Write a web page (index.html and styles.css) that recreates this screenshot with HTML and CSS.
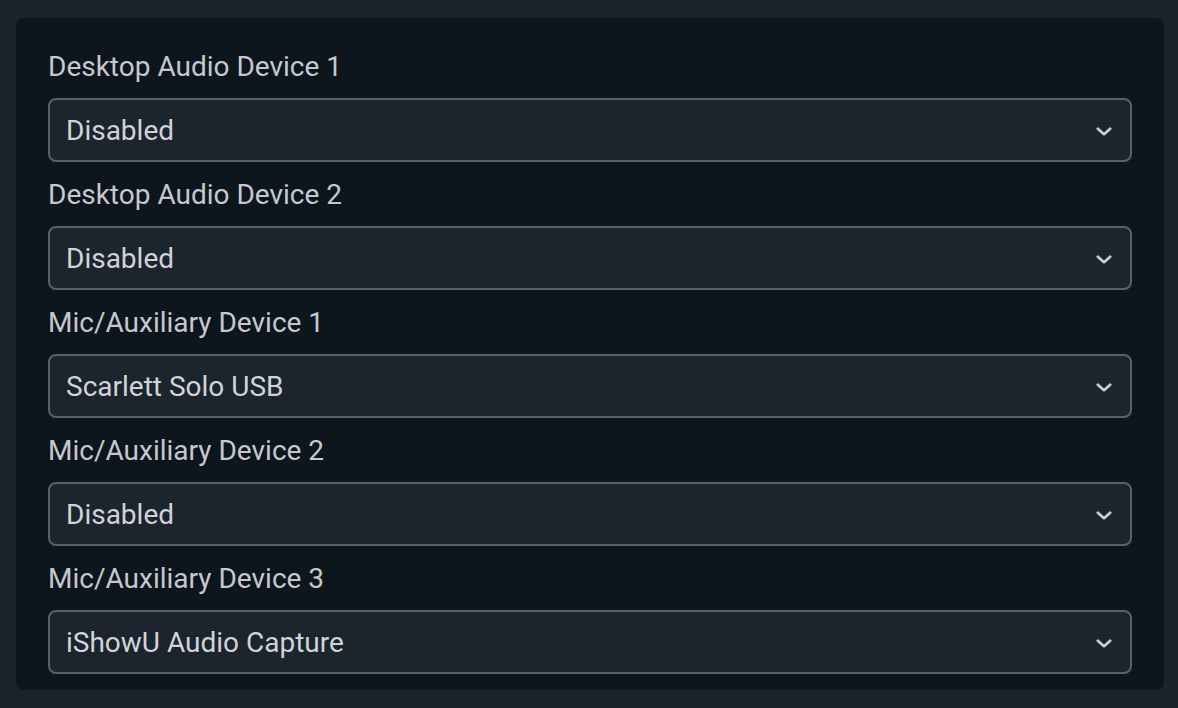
FILE: index.html
```html
<!DOCTYPE html>
<html lang="en">
<head>
<meta charset="utf-8">
<title>Audio Devices</title>
<link rel="stylesheet" href="styles.css">
</head>
<body>
<div class="panel">
  <div class="field">
    <div class="label">Desktop Audio Device 1</div>
    <div class="select"><span class="value">Disabled</span><svg class="chev" viewBox="0 0 14 8"><path d="M1.5 1.5 L7 6.5 L12.5 1.5"/></svg></div>
  </div>
  <div class="field">
    <div class="label">Desktop Audio Device 2</div>
    <div class="select"><span class="value">Disabled</span><svg class="chev" viewBox="0 0 14 8"><path d="M1.5 1.5 L7 6.5 L12.5 1.5"/></svg></div>
  </div>
  <div class="field">
    <div class="label">Mic/Auxiliary Device 1</div>
    <div class="select"><span class="value">Scarlett Solo USB</span><svg class="chev" viewBox="0 0 14 8"><path d="M1.5 1.5 L7 6.5 L12.5 1.5"/></svg></div>
  </div>
  <div class="field">
    <div class="label">Mic/Auxiliary Device 2</div>
    <div class="select"><span class="value">Disabled</span><svg class="chev" viewBox="0 0 14 8"><path d="M1.5 1.5 L7 6.5 L12.5 1.5"/></svg></div>
  </div>
  <div class="field">
    <div class="label">Mic/Auxiliary Device 3</div>
    <div class="select"><span class="value">iShowU Audio Capture</span><svg class="chev" viewBox="0 0 14 8"><path d="M1.5 1.5 L7 6.5 L12.5 1.5"/></svg></div>
  </div>
</div>
</body>
</html>
```

FILE: styles.css
```css
html, body {
  margin: 0;
  padding: 0;
  background: #1c232b;
}
body {
  padding: 18px 14px 18px 16px;
  font-family: Roboto, "Liberation Sans", sans-serif;
}
.panel {
  background: #0d161c;
  border-radius: 8px;
  padding: 33px 32px 16px 32px;
  display: flex;
  flex-direction: column;
}
.field + .field .label {
  padding-top: 17px;
}
.label {
  font-size: 28px;
  line-height: 32px;
  color: #c5c9cd;
  padding-bottom: 15px;
}
.select {
  height: 64px;
  box-sizing: border-box;
  border: 2px solid #5a6269;
  border-radius: 8px;
  background: #1c242d;
  display: flex;
  align-items: center;
  justify-content: space-between;
  padding: 0 18px 0 16px;
}
.value {
  font-size: 28px;
  color: #d0d4d8;
  line-height: 32px;
  padding-top: 2px;
}
.chev {
  width: 16px;
  height: 9px;
  margin-top: 3px;
  fill: none;
  stroke: #c9cdd1;
  stroke-width: 2.4;
  stroke-linecap: round;
  stroke-linejoin: round;
}
```
